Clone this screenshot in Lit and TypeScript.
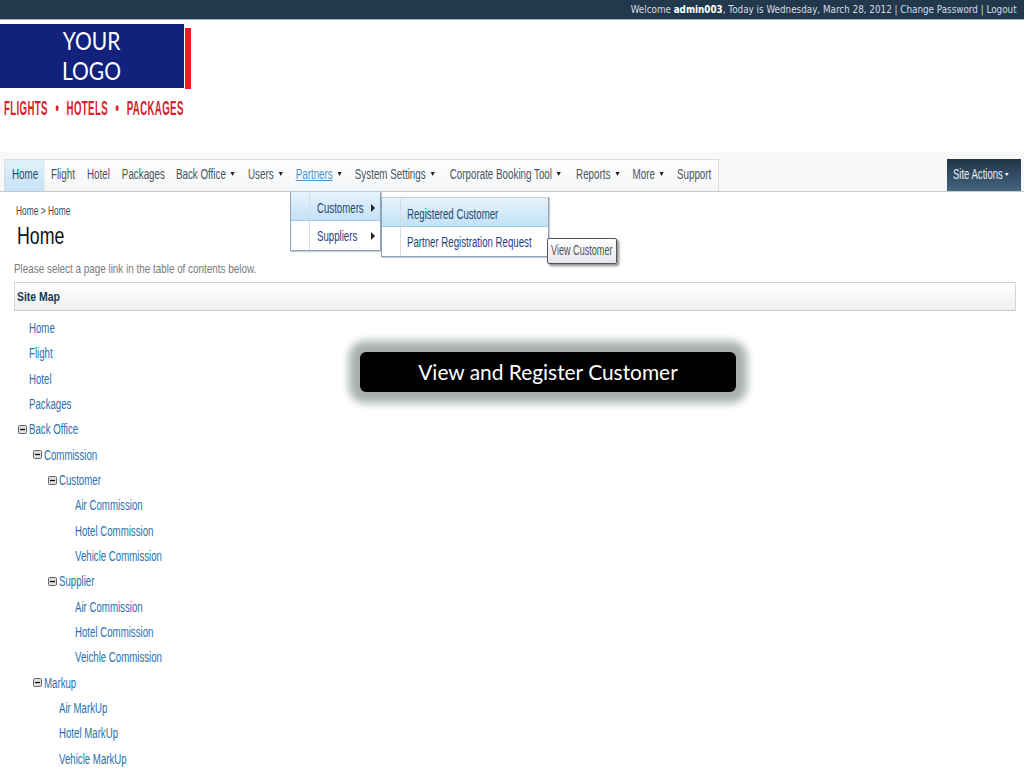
import { LitElement, html, css } from "lit";
import { customElement } from "lit/decorators.js";

type Node = { t: string; x: number; open?: boolean };
const tree: Node[] = [
  { t: "Home", x: 29 }, { t: "Flight", x: 29 }, { t: "Hotel", x: 29 }, { t: "Packages", x: 29 },
  { t: "Back Office", x: 29, open: true }, { t: "Commission", x: 44, open: true }, { t: "Customer", x: 59, open: true },
  { t: "Air Commission", x: 75 }, { t: "Hotel Commission", x: 75 }, { t: "Vehicle Commission", x: 75 },
  { t: "Supplier", x: 59, open: true }, { t: "Air Commission", x: 75 }, { t: "Hotel Commission", x: 75 }, { t: "Veichle Commission", x: 75 },
  { t: "Markup", x: 44, open: true }, { t: "Air MarkUp", x: 59 }, { t: "Hotel MarkUp", x: 59 }, { t: "Vehicle MarkUp", x: 59 },
];
// label, has arrow, extra offset before the item (in on-screen px)
const nav: [string, boolean, number][] = [
  ["Flight", false, 0], ["Hotel", false, -1], ["Packages", false, -1], ["Back Office", true, -2], ["Users", true, 0], ["Partners", true, 0],
  ["System Settings", true, 0], ["Corporate Booking Tool", true, 2], ["Reports", true, 2], ["More", true, 0], ["Support", false, 0],
];

@customElement("app-root")
export class AppRoot extends LitElement {
  static styles = css`
    :host { display: block; position: relative; width: 1024px; height: 768px; overflow: hidden; background: #fff; font-family: "Liberation Sans", Arial, sans-serif; }
    .sq { display: inline-block; white-space: nowrap; transform: scaleX(.69); transform-origin: left center; }
    .top { height: 19px; box-sizing: content-box; background: #22384d; border-bottom: 1px solid #a9b9c9; display: flex; justify-content: flex-end; align-items: center; padding-right: 7px; color: #d4dce4; font: 10px "DejaVu Sans", sans-serif; }
    .top b { color: #fff; }
    .top span { white-space: nowrap; transform: scaleX(.88); transform-origin: right center; }
    .logo { margin-top: 4px; display: flex; height: 65px; }
    .blue { width: 184px; height: 64px; background: #12227c; color: #fff; font: 25px/30px Lato, sans-serif; text-align: center; padding: 1px 1px 0 0; box-sizing: border-box; }
    .blue span { display: block; transform: scaleX(.84); }
    .red { width: 6px; height: 61px; margin: 4px 0 0 1px; background: #ed1c24; }
    .tag { margin: 9px 0 0 4px; height: 20px; color: #d9212c; font: bold 21px/20px "Liberation Sans", sans-serif; }
    .tag .sq { transform: scaleX(.46); letter-spacing: .8px; word-spacing: 1.5px; }
    .navrow { margin-top: 34px; padding-top: 7px; background: #f8f8f8; border-bottom: 1px solid #c6c9cc; display: flex; box-sizing: content-box; height: 32px; }
    .navbox { margin-left: 4px; width: 713px; height: 31px; border: 1px solid #dcdcdc; border-bottom: 0; background: linear-gradient(#fff, #f4f5f6); }
    .navlist { display: flex; align-items: center; height: 31px; width: 1018px; transform: scaleX(.7); transform-origin: left center; font-size: 14px; color: #4a5560; white-space: nowrap; }
    .homeTab { align-self: stretch; display: flex; align-items: center; padding: 0 8px 3px 10px; background: linear-gradient(#dff0fb, #c6e3f6); border-right: 1px solid #c0d8ea; color: #27486c; }
    .item { padding: 0 9.3px 3px; display: flex; align-items: center; }
    .item.act { color: #4b93c8; text-decoration: underline; }
    .tri { width: 0; height: 0; border: 3px solid transparent; border-top: 4px solid #222; border-bottom: 0; margin-left: 7px; }
    .site { margin: 0 3px 0 auto; width: 74px; height: 32px; background: linear-gradient(#1f3448, #456480); color: #e8eef3; font-size: 14px; display: flex; align-items: center; padding: 0 0 2px 6px; box-sizing: border-box; }
    .site div { display: flex; align-items: center; white-space: nowrap; transform: scaleX(.68); transform-origin: left center; }
    .site i { width: 0; height: 0; border: 3px solid transparent; border-top: 3px solid #fff; border-bottom: 0; margin-left: 3px; }
    .main { padding: 0 8px 0 14px; }
    .crumb { margin: 12px 0 0 2px; height: 14px; font-size: 12px; line-height: 14px; color: #3e4a55; }
    .crumb .sq { transform: scaleX(.7); }
    h1 { margin: 3px 0 0 3px; height: 30px; font: 24px/30px "Liberation Sans", sans-serif; color: #111; }
    h1 .sq { transform: scaleX(.74); }
    .hint { margin-top: 11px; height: 14px; font-size: 13px; line-height: 14px; color: #7a7a7a; }
    .hint .sq { transform: scaleX(.76); }
    .map { margin-top: 6px; height: 27px; border: 1px solid #d6d6d6; border-bottom-color: #c8c8c8; background: linear-gradient(#fff, #efefef); display: flex; align-items: center; padding-left: 2px; font: bold 12px "Liberation Sans", sans-serif; color: #123a5c; }
    .map .sq { transform: scaleX(.87); }
    .tree { margin: 4.3px 0 0 -14px; }
    .row { height: 25.35px; display: flex; align-items: center; font-size: 14px; color: #2a6fb0; box-sizing: border-box; }
    .row svg { width: 9px; height: 9px; margin-right: 2px; margin-left: -11px; flex: none; }
    .menu { position: absolute; background: #fff; border: 1px solid #8ea3bb; border-top-color: #c0ccd8; box-sizing: border-box; font-size: 14px; color: #1f4480; box-shadow: 1px 1px 1px #ccc; }
    .menu .r { height: 29px; padding-top: 1px; box-sizing: border-box; display: flex; align-items: center; position: relative; }
    .menu .r.hi { padding-top: 3px; background: linear-gradient(#e6f3fc, #c3e1f6); border-bottom: 1px solid #a8cbe4; color: #27486c; }
    .menu .r::before { content: ""; position: absolute; top: 0; bottom: 0; width: 1px; background: #d8dde2; left: var(--g); }
    .arr { position: absolute; right: 5px; width: 0; height: 0; border: 4px solid transparent; border-left: 4px solid #222; border-right: 0; }
    .m1 { left: 290px; top: 191px; width: 91px; height: 60px; --g: 18px; }
    .m1 .r { padding-left: 26px; }
    .m2 { left: 381px; top: 197px; width: 168px; height: 60px; --g: 18px; }
    .m2 .r { padding-left: 25px; }
    .tip { position: absolute; left: 547px; top: 238px; width: 70px; height: 26px; box-sizing: border-box; border: 1px solid #555; border-radius: 2px; background: linear-gradient(#fff, #e4e5ee); box-shadow: 2px 2px 3px #888; font-size: 14px; color: #555; display: flex; align-items: center; padding: 0 0 2px 3px; }
    .tip .sq { transform: scaleX(.65); }
    .call { position: absolute; left: 360px; top: 352px; width: 376px; height: 40px; background: #000; border-radius: 6px; box-shadow: 0 0 8px 11px #a6aeae; color: #fff; font: 22px/40px Lato, sans-serif; text-align: center; }
    .call span { display: block; transform: scaleX(.95); }
  `;

  render() {
    return html`
      <div class="top"><span>Welcome <b>admin003</b>, Today is Wednesday, March 28, 2012 | Change Password | Logout</span></div>
      <div class="logo"><div class="blue"><span>YOUR</span><span>LOGO</span></div><div class="red"></div></div>
      <div class="tag"><span class="sq">FLIGHTS &nbsp;•&nbsp; HOTELS &nbsp;•&nbsp; PACKAGES</span></div>
      <div class="navrow">
        <div class="navbox"><div class="navlist">
          <div class="homeTab">Home</div>
          ${nav.map(([t, a, dx]) => html`<div class="item ${t === "Partners" ? "act" : ""}" style="margin-left:${dx / 0.7}px">${t}${a ? html`<span class="tri"></span>` : ""}</div>`)}
        </div></div>
        <div class="site"><div>Site Actions<i></i></div></div>
      </div>
      <div class="main">
        <div class="crumb"><span class="sq">Home &gt; Home</span></div>
        <h1><span class="sq">Home</span></h1>
        <div class="hint"><span class="sq">Please select a page link in the table of contents below.</span></div>
        <div class="map"><span class="sq">Site Map</span></div>
        <div class="tree">
          ${tree.map((n) => html`<div class="row" style="padding-left:${n.x}px">
            ${n.open ? html`<svg viewBox="0 0 9 9"><rect x=".5" y=".5" width="8" height="8" rx="1" fill="#ddd" stroke="#666"/><path d="M2 4.5h5" stroke="#000" stroke-width="1.2"/></svg>` : ""}
            <span class="sq">${n.t}</span></div>`)}
        </div>
      </div>
      <div class="menu m1">
        <div class="r hi"><span class="sq">Customers</span><span class="arr"></span></div>
        <div class="r"><span class="sq">Suppliers</span><span class="arr"></span></div>
      </div>
      <div class="menu m2">
        <div class="r hi"><span class="sq">Registered Customer</span></div>
        <div class="r"><span class="sq">Partner Registration Request</span></div>
      </div>
      <div class="tip"><span class="sq">View Customer</span></div>
      <div class="call"><span>View and Register Customer</span></div>
    `;
  }
}
